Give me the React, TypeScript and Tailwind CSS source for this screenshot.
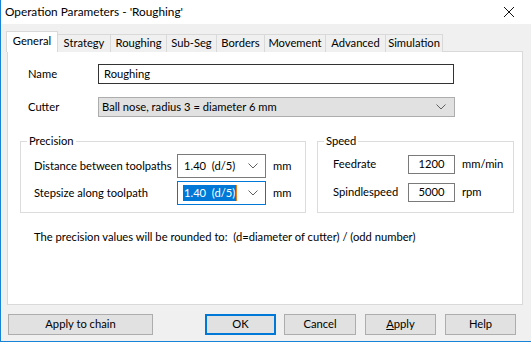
import React from "react";

const tabs = ["General", "Strategy", "Roughing", "Sub-Seg", "Borders", "Movement", "Advanced", "Simulation"];
const tabWidths = [52, 53, 56, 50, 48, 61, 60, 57];

const Chevron = () => (
  <svg width="10" height="6" viewBox="0 0 10 6" className="shrink-0">
    <path d="M0.5 0.5 L5 5 L9.5 0.5" fill="none" stroke="#606060" strokeWidth="1" />
  </svg>
);

const App: React.FC = () => {
  return (
    <div
      className="w-[531px] h-[345px] bg-white overflow-hidden text-[11.2px] text-black"
      style={{ fontFamily: "Lato, 'Noto Sans', sans-serif" }}
    >
      <div className="h-[342px] bg-[#f0f0f0] border-l border-b border-[#1883d7] flex flex-col">
        {/* Title bar */}
        <div className="h-[24px] bg-white flex items-center justify-between pl-[4px] pr-[17px] shrink-0">
          <span className="text-[11.8px]">Operation Parameters - 'Roughing'</span>
          <svg width="10" height="10" viewBox="0 0 10 10">
            <path d="M0 0 L10 10 M10 0 L0 10" stroke="#111" strokeWidth="1" />
          </svg>
        </div>

        {/* Tabs */}
        <div className="flex items-end ml-[5px] mt-[7px] h-[21px] relative z-10">
          {tabs.map((t, i) => (
            <div
              key={t}
              style={{ width: tabWidths[i] }}
              className={
                i === 0
                  ? "h-[21px] bg-white border border-b-0 border-[#d9d9d9] flex items-center justify-center pb-[2px]"
                  : "h-[18px] bg-[#f0f0f0] border border-l-0 border-b-0 border-[#d9d9d9] flex items-center justify-center"
              }
            >
              {t}
            </div>
          ))}
        </div>

        {/* Panel */}
        <div className="ml-[6px] w-[516px] h-[254px] bg-white border border-[#d9d9d9] -mt-px flex flex-col">
          <div className="flex items-center mt-[12px] h-[20px]">
            <span className="w-[70px] ml-[20px]">Name</span>
            <div className="w-[356px] h-[20px] border border-[#333] flex items-center px-[5px]">Roughing</div>
          </div>
          <div className="flex items-center mt-[13px] h-[20px]">
            <span className="w-[70px] ml-[20px]">Cutter</span>
            <div className="w-[357px] h-[20px] bg-[#e1e1e1] border border-[#adadad] flex items-center justify-between pl-[3px] pr-[8px]">
              <span>Ball nose, radius 3 = diameter 6 mm</span>
              <Chevron />
            </div>
          </div>

          <div className="flex mt-[24px] ml-[12px] gap-[11px]">
            {/* Precision */}
            <div className="relative w-[286px] h-[72px] border border-[#dcdcdc] flex flex-col pl-[13px] pt-[12px] gap-[3px]">
              <span className="absolute -top-[9px] left-[6px] bg-white px-[2px] leading-[16px]">Precision</span>
              <div className="flex items-center h-[24px]">
                <span className="w-[143px] whitespace-nowrap">Distance between toolpaths</span>
                <div className="w-[89px] h-[24px] border border-[#7a7a7a] flex items-center justify-between pl-[6px] pr-[7px]">
                  <span className="whitespace-pre">1.40  (d/5)</span>
                  <Chevron />
                </div>
                <span className="ml-[7px]">mm</span>
              </div>
              <div className="flex items-center h-[24px]">
                <span className="w-[143px] whitespace-nowrap">Stepsize along toolpath</span>
                <div className="w-[89px] h-[24px] border border-[#0078d7] flex items-center justify-between pl-[5px] pr-[7px]">
                  <span className="flex items-center">
                    <span className="whitespace-pre bg-[#0078d7] text-white px-[1px] leading-[16px]">1.40  (d/5)</span>
                    <span className="w-px h-[16px] bg-[#e8801c]" />
                  </span>
                  <Chevron />
                </div>
                <span className="ml-[7px]">mm</span>
              </div>
            </div>

            {/* Speed */}
            <div className="relative w-[197px] h-[72px] border border-[#dcdcdc] flex flex-col pl-[15px] pt-[13px] gap-[9px]">
              <span className="absolute -top-[9px] left-[6px] bg-white px-[2px] leading-[16px]">Speed</span>
              <div className="flex items-center h-[19px]">
                <span className="w-[75px]">Feedrate</span>
                <div className="w-[47px] h-[19px] border border-[#7a7a7a] flex items-center justify-center">1200</div>
                <span className="ml-[7px]">mm/min</span>
              </div>
              <div className="flex items-center h-[19px]">
                <span className="w-[75px]">Spindlespeed</span>
                <div className="w-[47px] h-[19px] border border-[#7a7a7a] flex items-center justify-center">5000</div>
                <span className="ml-[7px]">rpm</span>
              </div>
            </div>
          </div>

          <div className="ml-[26px] mt-[16px] whitespace-pre">
            The precision values will be rounded to:  (d=diameter of cutter) / (odd number)
          </div>
        </div>

        {/* Buttons */}
        <div className="flex items-center mt-[9px] h-[21px] pl-[7px]">
          <div className="w-[145px] h-[21px] bg-[#e1e1e1] border border-[#adadad] flex items-center justify-center">
            Apply to chain
          </div>
          <div className="w-[71px] h-[21px] ml-[52px] bg-[#e1e1e1] border-2 border-[#0078d7] flex items-center justify-center">
            OK
          </div>
          <div className="w-[72px] h-[21px] ml-[8px] bg-[#e1e1e1] border border-[#adadad] flex items-center justify-center">
            Cancel
          </div>
          <div className="w-[71px] h-[21px] ml-[9px] bg-[#e1e1e1] border border-[#adadad] flex items-center justify-center">
            <span>
              <span className="underline">A</span>pply
            </span>
          </div>
          <div className="w-[71px] h-[21px] ml-[9px] bg-[#e1e1e1] border border-[#adadad] flex items-center justify-center">
            Help
          </div>
        </div>
      </div>
    </div>
  );
};

export default App;
